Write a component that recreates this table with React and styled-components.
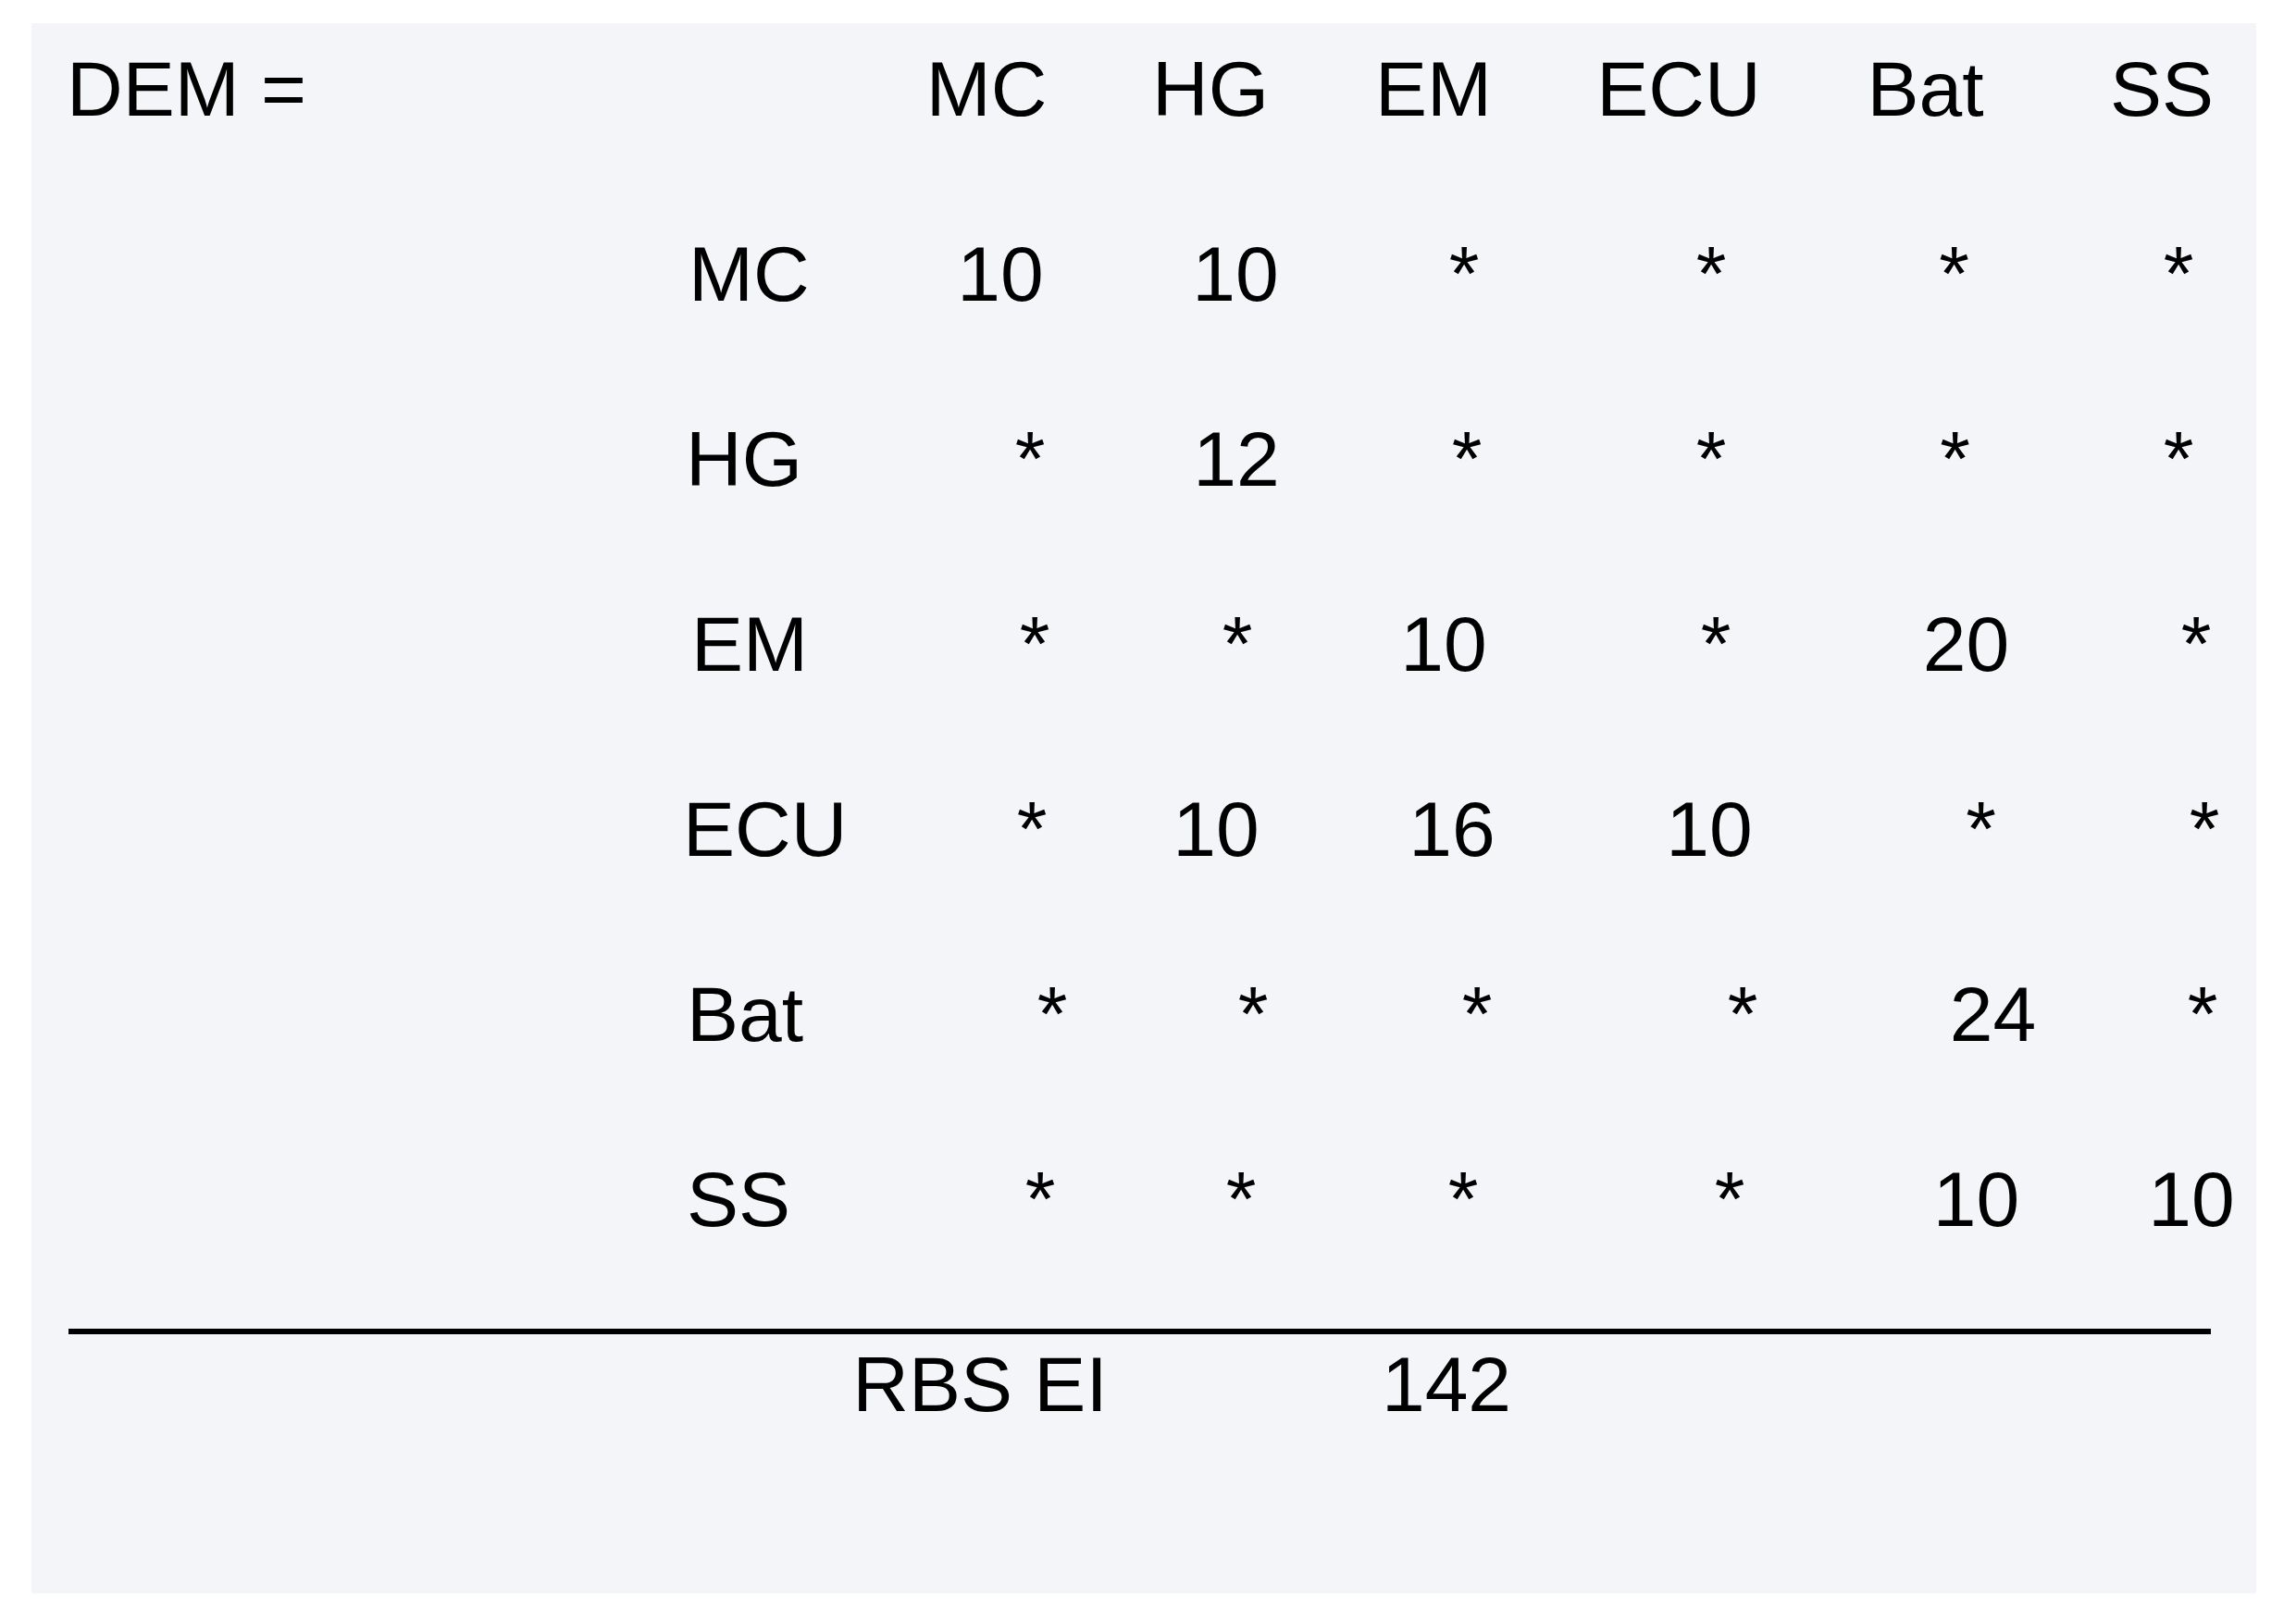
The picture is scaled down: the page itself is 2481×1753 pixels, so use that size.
import React from 'react';
import styled, { createGlobalStyle } from 'styled-components';

// Column headers: [text, horizontal nudge in px]
const HEADERS = [
  ['MC', 0],
  ['HG', 0],
  ['EM', 0],
  ['ECU', 0],
  ['Bat', -17],
  ['SS', 0],
];

// Matrix rows, each cell is [value, nudge] – values sit a bit off the header centres
const ROWS = [
  { label: 'MC', dx: 6, cells: [['10', 15], ['10', 27], ['*', 33], ['*', 35], ['*', 14], ['*', 18]] },
  { label: 'HG', dx: 3, cells: [['*', 47], ['12', 28], ['*', 36], ['*', 35], ['*', 15], ['*', 18]] },
  { label: 'EM', dx: 9, cells: [['*', 52], ['*', 29], ['10', 11], ['*', 40], ['20', 27], ['*', 37]] },
  { label: 'ECU', dx: 0, cells: [['*', 49], ['10', 6], ['16', 20], ['10', 33], ['*', 43], ['*', 46]] },
  { label: 'Bat', dx: 4, cells: [['*', 71], ['*', 46], ['*', 47], ['*', 69], ['24', 56], ['*', 44]] },
  { label: 'SS', dx: 4, cells: [['*', 58], ['*', 33], ['*', 32], ['*', 55], ['10', 38], ['10', 32]] },
];

function App() {
  return (
    <>
      <GlobalStyle />
      <Panel>
        <Matrix>
          <Row>
            <Title>DEM =</Title>
            <span />
            {HEADERS.map(([text, dx]) => (
              <Cell key={text} $dx={dx}>{text}</Cell>
            ))}
          </Row>

          {ROWS.map(row => (
            <Row key={row.label}>
              <span />
              <RowLabel $dx={row.dx}>{row.label}</RowLabel>
              {row.cells.map(([value, dx], i) => (
                <Cell key={i} $dx={dx}>{value}</Cell>
              ))}
            </Row>
          ))}
        </Matrix>

        <Rule />

        {/* total under the rule */}
        <Row>
          <span />
          <span />
          <Cell $dx={-7}>RBS EI</Cell>
          <span />
          <Cell $dx={14}>142</Cell>
        </Row>
      </Panel>
    </>
  );
}

/* ── Styled Components ── */

const GlobalStyle = createGlobalStyle`
  html, body {
    margin: 0;
    padding: 0;
    background: #ffffff;
  }
  body {
    font-family: "Liberation Sans", Arial, sans-serif;
    color: #000;
  }
`;

const Panel = styled.div`
  margin: 25px 0 0 34px;
  width: 2404px;
  height: 1697px;
  box-sizing: border-box;
  padding: 21px 0 0 38px;
  background: #f4f5f9;
  display: flex;
  flex-direction: column;
`;

const Matrix = styled.div`
  display: flex;
  flex-direction: column;
  gap: 100px;
`;

const Row = styled.div`
  display: grid;
  grid-template-columns: 666px 207px 242px 242px 240px 290px 277px 200px;
  height: 100px;
  font-size: 84px;
  line-height: 100px;
`;

const Title = styled.div`
  white-space: nowrap;
`;

const RowLabel = styled.div`
  white-space: nowrap;
  transform: translateX(${({ $dx }) => $dx || 0}px);
`;

const Cell = styled.div`
  display: flex;
  justify-content: center;
  white-space: nowrap;
  transform: translateX(${({ $dx }) => $dx || 0}px);
`;

const Rule = styled.div`
  margin: 90px 0 4px 2px;
  width: 2315px;
  height: 6px;
  background: #000;
`;

export default App;
